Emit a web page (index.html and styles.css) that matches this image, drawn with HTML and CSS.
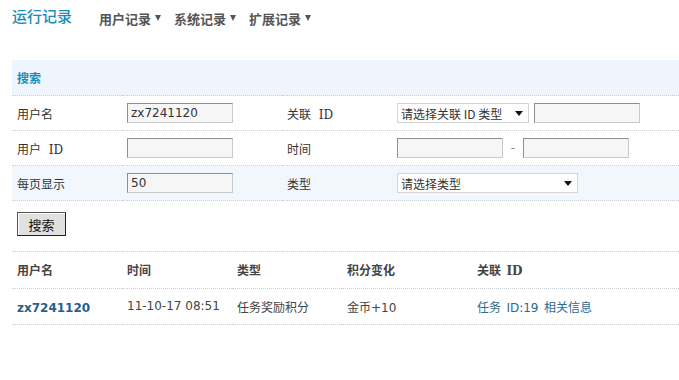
FILE: index.html
```html
<!DOCTYPE html>
<html>
<head>
<meta charset="utf-8">
<link rel="stylesheet" href="styles.css">
</head>
<body>
<div class="page">
  <div class="topbar">
    <h1 class="title">运行记录</h1>
    <nav class="nav">
      <span class="nav-item">用户记录<i class="caret"></i></span>
      <span class="nav-item">系统记录<i class="caret"></i></span>
      <span class="nav-item">扩展记录<i class="caret"></i></span>
    </nav>
  </div>

  <table class="form-table">
    <colgroup><col class="c1"><col class="c2"><col class="c3"><col></colgroup>
    <tr class="head"><th colspan="4">搜索</th></tr>
    <tr>
      <td>用户名</td>
      <td><input class="txt" type="text" value="zx7241120"></td>
      <td>关联&nbsp; <span class="serif">ID</span></td>
      <td><span class="sel sel-a">请选择关联 ID 类型</span><input class="txt gap" type="text"></td>
    </tr>
    <tr>
      <td>用户&nbsp; <span class="serif">ID</span></td>
      <td><input class="txt" type="text"></td>
      <td>时间</td>
      <td><input class="txt" type="text"><span class="dash">-</span><input class="txt" type="text"></td>
    </tr>
    <tr class="alt">
      <td>每页显示</td>
      <td><input class="txt" type="text" value="50"></td>
      <td>类型</td>
      <td><span class="sel sel-b">请选择类型</span></td>
    </tr>
    <tr class="btn-row">
      <td colspan="4"><button class="btn" type="button">搜索</button></td>
    </tr>
  </table>

  <table class="list-table">
    <colgroup><col class="l1"><col class="l2"><col class="l3"><col class="l4"><col></colgroup>
    <tr class="list-head">
      <th>用户名</th><th>时间</th><th>类型</th><th>积分变化</th><th>关联&nbsp; <span class="serif">ID</span></th>
    </tr>
    <tr>
      <td><a class="user" href="#">zx7241120</a></td>
      <td class="num">11-10-17 08:51</td>
      <td>任务奖励积分</td>
      <td>金币<span class="num">+10</span></td>
      <td><a class="link" href="#">任务&nbsp; <span class="num">ID:19</span></a>&nbsp; <a class="link" href="#">相关信息</a></td>
    </tr>
  </table>
</div>
</body>
</html>
```

FILE: styles.css
```css
html, body {
  margin: 0;
  padding: 0;
  background: #fff;
}
body {
  font-family: "DejaVu Sans", "Noto Sans CJK SC", sans-serif;
  font-size: 12px;
  color: #333;
}
.page {
  padding-left: 12px;
}
.topbar {
  display: flex;
  align-items: center;
  height: 36px;
  margin-bottom: 24px;
}
.title {
  margin: 0;
  font-family: "Noto Sans CJK SC", sans-serif;
  font-size: 15px;
  font-weight: 500;
  color: #1b8cb6;
  line-height: 20px;
  width: 87px;
  position: relative;
  top: -2px;
}
.nav {
  display: flex;
  gap: 13px;
}
.nav-item {
  font-family: "Noto Sans CJK SC", sans-serif;
  font-weight: bold;
  font-size: 13px;
  color: #555;
  display: flex;
  align-items: center;
}
.caret {
  display: inline-block;
  width: 0;
  height: 0;
  border-left: 3px solid transparent;
  border-right: 3px solid transparent;
  border-top: 6px solid #555;
  margin-left: 4px;
}
table {
  border-collapse: collapse;
  width: 100%;
  table-layout: fixed;
}
td, th {
  padding: 0 5px;
  text-align: left;
  border-bottom: 1px dotted #c8d0d8;
  font-family: "DejaVu Sans", "Noto Sans CJK SC", sans-serif;
}
.serif { font-family: "DejaVu Serif", serif; }
.c1 { width: 110px; }
.c2 { width: 160px; }
.c3 { width: 110px; }
.form-table td { height: 35px; box-sizing: border-box; }
.form-table .head th {
  height: 35px;
  background: #eef5fc;
  color: #1a8dbf;
  font-weight: bold;
  font-family: "Noto Sans CJK SC", sans-serif;
}
.form-table .alt td { background: #f1f7fd; }
.txt {
  box-sizing: border-box;
  width: 106px;
  height: 20px;
  margin: 0;
  padding: 0 3px;
  border: 1px solid #c9c9c9;
  border-top-color: #8f8f8f;
  border-left-color: #8f8f8f;
  background: #f6f6f6;
  font-family: "DejaVu Sans", sans-serif;
  font-size: 12px;
  color: #333;
  vertical-align: middle;
}
.gap { margin-left: 5px; }
.dash {
  display: inline-block;
  width: 20px;
  text-align: center;
  color: #888;
  vertical-align: middle;
}
.sel {
  box-sizing: border-box;
  display: inline-flex;
  align-items: center;
  height: 20px;
  padding-left: 3px;
  border: 1px solid #d4d4d4;
  background: #fff;
  font-family: "Noto Sans CJK SC", sans-serif;
  color: #333;
  vertical-align: middle;
  position: relative;
}
.sel::after {
  content: "";
  position: absolute;
  right: 5px;
  top: 7px;
  border-left: 4px solid transparent;
  border-right: 4px solid transparent;
  border-top: 5px solid #111;
}
.sel-a { width: 132px; }
.sel-b { width: 181px; }
.form-table .btn-row td {
  height: 51px;
  vertical-align: top;
  padding-top: 11px;
}
.btn {
  box-sizing: border-box;
  width: 49px;
  height: 24px;
  margin: 0;
  padding: 0;
  background: #e0e0e0;
  border: 1px solid #222;
  border-top-color: #555;
  border-left-color: #555;
  box-shadow: inset 1px 1px 0 #fff;
  font-family: "Noto Sans CJK SC", sans-serif;
  font-size: 13px;
  color: #111;
}
.list-table td, .list-table th { height: 36px; box-sizing: border-box; }
.l1, .l2, .l3 { width: 110px; }
.l4 { width: 130px; }
.list-head th {
  font-family: "Noto Sans CJK SC", sans-serif;
  font-weight: bold;
  color: #444;
}
.list-table td { color: #444; font-family: "Noto Sans CJK SC", sans-serif; }
.list-table .num { font-family: "DejaVu Sans", sans-serif; }
.user {
  font-family: "DejaVu Sans", sans-serif;
  font-weight: bold;
  color: #2a5e8c;
  text-decoration: none;
}
.link {
  color: #2d6a8f;
  text-decoration: none;
}
```
